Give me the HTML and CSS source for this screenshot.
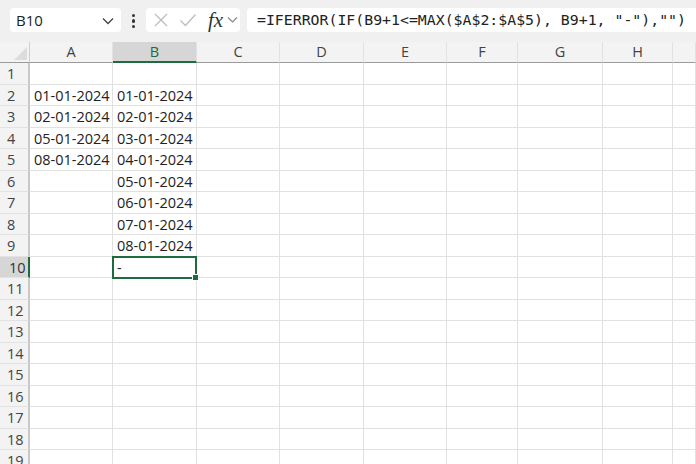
FILE: index.html
```html
<!DOCTYPE html>
<html lang="en">
<head>
  <meta charset="UTF-8">
  <title>IFERROR date fill</title>
  <link rel="stylesheet" href="styles.css">
</head>
<body>

  <div class="toolbar">
    <div class="name-box">
      <span>B10</span>
      <svg class="chev" width="12" height="8" viewBox="0 0 12 8"><path d="M1 1.5 L6 6.5 L11 1.5" fill="none" stroke="#444" stroke-width="1.3"/></svg>
    </div>
    <div class="kebab"><i></i><i></i><i></i></div>
    <div class="fx-box">
      <svg width="16" height="16" viewBox="0 0 16 16"><path d="M2 2 L14 14 M14 2 L2 14" stroke="#bdbdbd" stroke-width="1.3"/></svg>
      <svg width="18" height="16" viewBox="0 0 18 16"><path d="M1.5 8.5 L6.5 13.5 L16.5 2.5" fill="none" stroke="#bdbdbd" stroke-width="1.3"/></svg>
      <span class="fx">fx</span>
      <svg width="11" height="8" viewBox="0 0 11 8"><path d="M1 1.5 L5.5 6 L10 1.5" fill="none" stroke="#888" stroke-width="1.2"/></svg>
    </div>
    <div class="formula">=IFERROR(IF(B9+1&lt;=MAX($A$2:$A$5), B9+1, "-"),"")</div>
  </div>

  <div class="sheet" id="sheet"></div>

  <script>
    const cols = ["A", "B", "C", "D", "E", "F", "G", "H", ""];
    const colA = ["", "01-01-2024", "02-01-2024", "05-01-2024", "08-01-2024"];
    const colB = ["", "01-01-2024", "02-01-2024", "03-01-2024", "04-01-2024",
                  "05-01-2024", "06-01-2024", "07-01-2024", "08-01-2024", "-"];
    const sheet = document.getElementById("sheet");

    let html = '<div class="corner"><span></span></div>';
    cols.forEach(c => {
      html += `<div class="col-head${c === "B" ? " active" : ""}">${c}</div>`;
    });

    for (let r = 1; r <= 19; r++) {
      html += `<div class="row-head${r === 10 ? " active" : ""}">${r}</div>`;
      cols.forEach((c, i) => {
        let val = "";
        if (i === 0) val = colA[r - 1] || "";
        if (i === 1) val = colB[r - 1] || "";
        const sel = (i === 1 && r === 10) ? " selected" : "";
        html += `<div class="cell${sel}">${val}</div>`;
      });
    }
    sheet.innerHTML = html;
  </script>

</body>
</html>
```

FILE: styles.css
```css
body {
  margin: 0;
  font-family: "Open Sans", "Noto Sans", sans-serif;
  background: #fff;
  overflow: hidden;
}

.toolbar {
  height: 42px;
  background: #f0f0f0;
  display: flex;
  align-items: center;
  padding: 0 0 0 10px;
  box-sizing: border-box;
}

.name-box {
  width: 111px;
  height: 24px;
  background: #fff;
  border-radius: 4px;
  display: flex;
  align-items: center;
  justify-content: space-between;
  padding: 0 7px 0 6px;
  box-sizing: border-box;
  font-size: 15px;
  color: #222;
  margin-bottom: 2px;
}

.kebab {
  width: 25px;
  display: flex;
  flex-direction: column;
  align-items: center;
  gap: 2px;
}

.kebab i {
  width: 3.5px;
  height: 3.5px;
  border-radius: 50%;
  background: #333;
}

.fx-box {
  width: 94px;
  height: 24px;
  background: #fff;
  border-radius: 4px;
  display: flex;
  align-items: center;
  gap: 10px;
  padding: 0 0 0 7px;
  box-sizing: border-box;
  margin-bottom: 2px;
}

.fx {
  font-family: "Liberation Serif", serif;
  font-style: italic;
  font-size: 21px;
  line-height: 20px;
  color: #333;
  margin-right: -6px;
  margin-left: 1px;
}

.formula {
  margin-left: 7px;
  flex: 1;
  height: 24px;
  background: #fff;
  border-radius: 4px 0 0 4px;
  font-family: "DejaVu Sans Mono", "Liberation Mono", monospace;
  font-size: 14.85px;
  line-height: 24px;
  padding-left: 10px;
  color: #222;
  white-space: nowrap;
  margin-bottom: 2px;
}

.sheet {
  display: grid;
  grid-template-columns: 30px 83px 84px 83px 84px 83px 71px 85px 70px 1fr;
  grid-template-rows: 21px;
  grid-auto-rows: 21.5px;
  font-size: 14.5px;
  color: #222;
}

.corner {
  background: #f3f3f3;
  border-right: 1px solid #d0d0d0;
  border-bottom: 1px solid #9b9b9b;
  position: relative;
}

.corner span {
  position: absolute;
  right: 2px;
  bottom: 2px;
  width: 0;
  height: 0;
  border-left: 13px solid transparent;
  border-bottom: 13px solid #dcdcdc;
}

.col-head {
  background: #f3f3f3;
  border-right: 1px solid #e2e2e2;
  border-bottom: 1px solid #9b9b9b;
  text-align: center;
  line-height: 20px;
  color: #444;
}

.col-head.active {
  background: #d6d6d6;
  color: #1d6b3f;
  border-bottom: 2px solid #1d6b3f;
  line-height: 19px;
}

.row-head {
  background: #f3f3f3;
  border-right: 2px solid #c8c8c8;
  border-bottom: 1px solid #e2e2e2;
  padding-left: 7px;
  line-height: 21px;
  color: #444;
}

.row-head.active {
  background: #d6d6d6;
  color: #333;
  padding-left: 9px;
  border-right-color: #1d6b3f;
}

.cell {
  border-right: 1px solid #e1e1e1;
  border-bottom: 1px solid #e1e1e1;
  padding-left: 4px;
  line-height: 21px;
  white-space: nowrap;
}

.cell.selected {
  border: 2px solid #1d6b3f;
  margin: -1px 0 -1px -1px;
  padding-left: 3px;
  line-height: 19px;
  position: relative;
}

.cell.selected::after {
  content: "";
  position: absolute;
  right: -4px;
  bottom: -4px;
  width: 5px;
  height: 5px;
  background: #1d6b3f;
  border: 1px solid #fff;
}

.chev { margin-top: 1px; }
```
